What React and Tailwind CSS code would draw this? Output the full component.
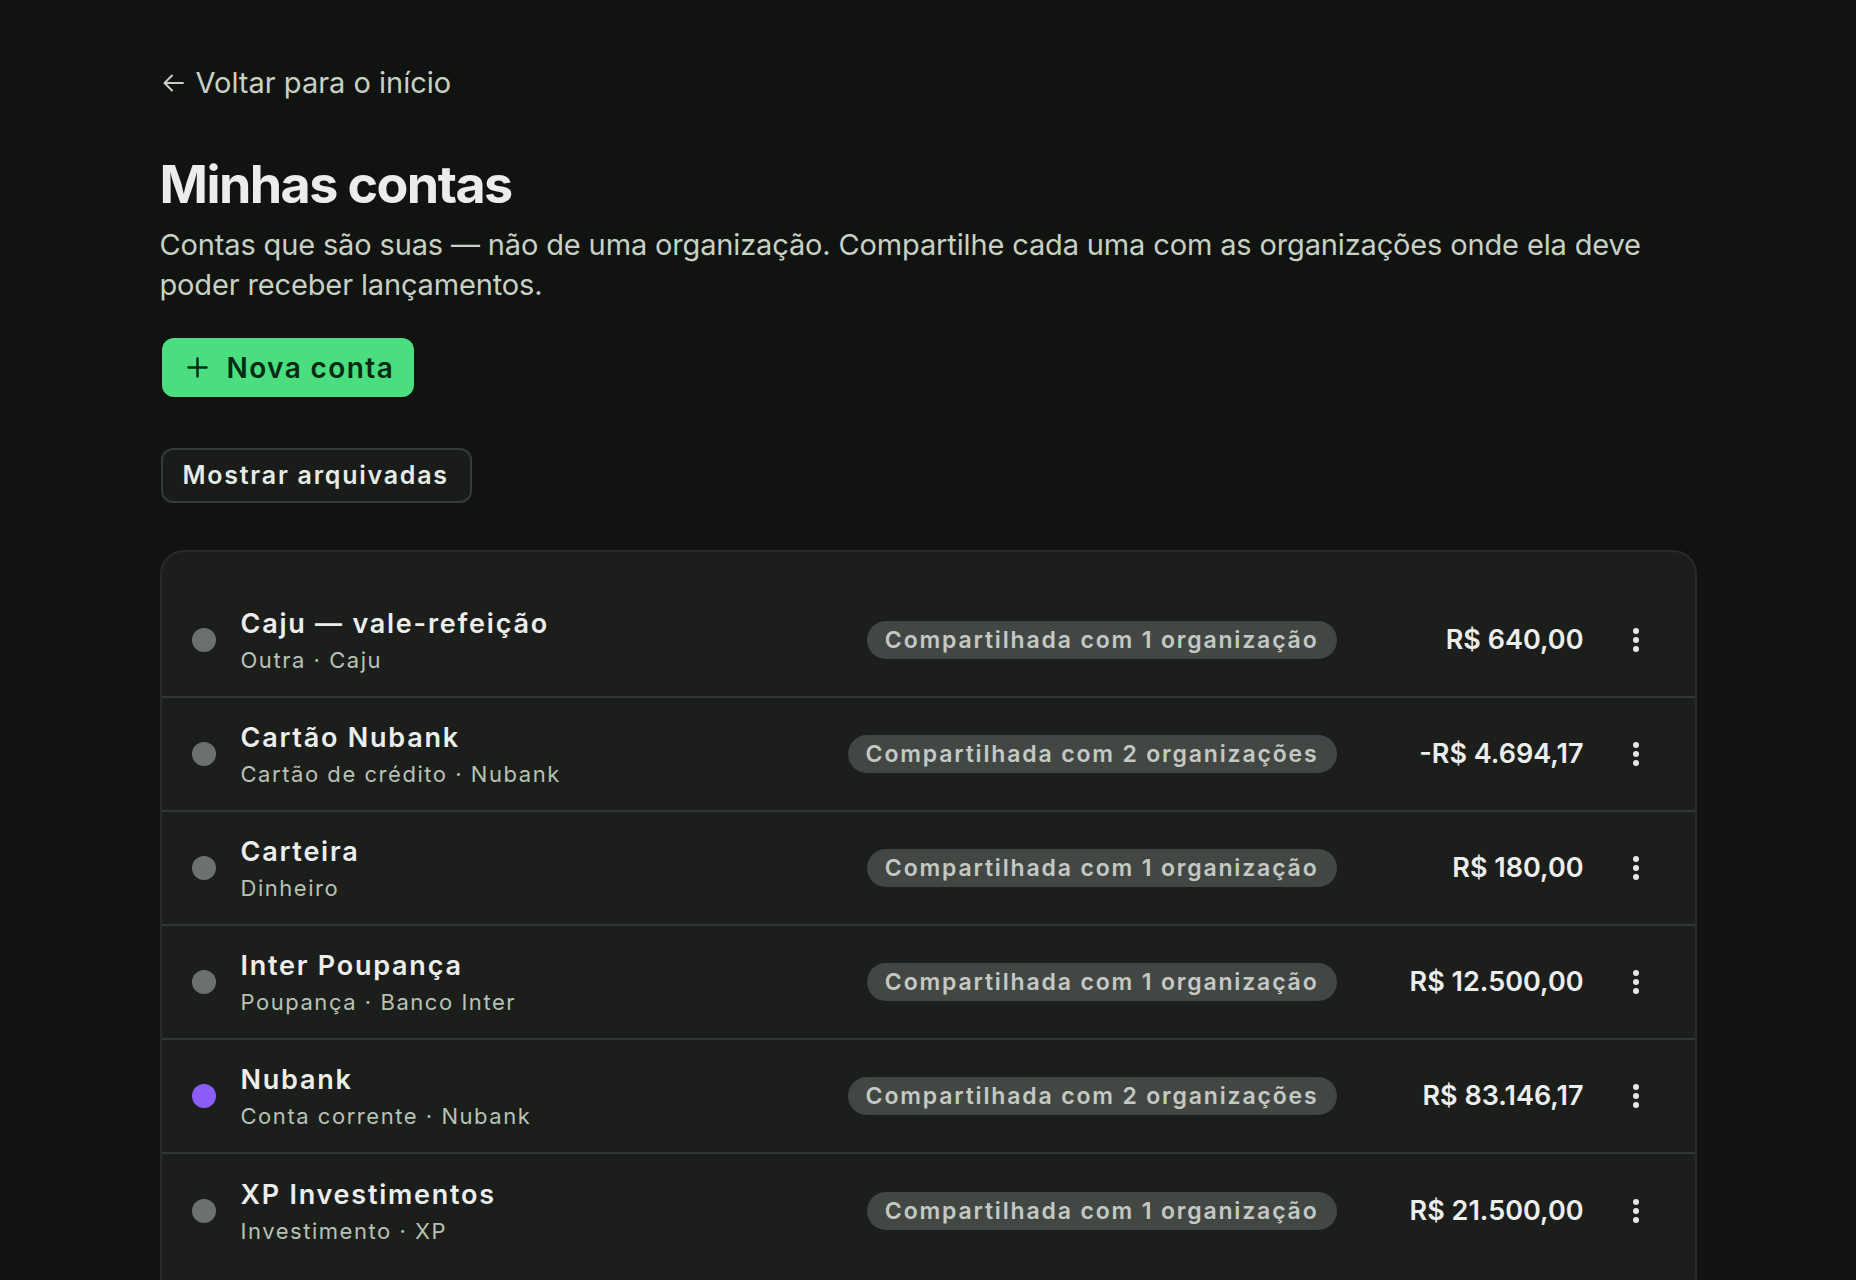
import React from "react";

const accounts = [
  { name: "Caju — vale-refeição", sub: "Outra · Caju", badge: "Compartilhada com 1 organização", amount: "R$ 640,00", dot: "bg-[#6b716c]" },
  { name: "Cartão Nubank", sub: "Cartão de crédito · Nubank", badge: "Compartilhada com 2 organizações", amount: "-R$ 4.694,17", dot: "bg-[#6b716c]" },
  { name: "Carteira", sub: "Dinheiro", badge: "Compartilhada com 1 organização", amount: "R$ 180,00", dot: "bg-[#6b716c]" },
  { name: "Inter Poupança", sub: "Poupança · Banco Inter", badge: "Compartilhada com 1 organização", amount: "R$ 12.500,00", dot: "bg-[#6b716c]" },
  { name: "Nubank", sub: "Conta corrente · Nubank", badge: "Compartilhada com 2 organizações", amount: "R$ 83.146,17", dot: "bg-[#8b5cf6]" },
  { name: "XP Investimentos", sub: "Investimento · XP", badge: "Compartilhada com 1 organização", amount: "R$ 21.500,00", dot: "bg-[#6b716c]" },
];

function Kebab() {
  return (
    <svg width="12" height="30" viewBox="0 0 12 30" fill="#e5e8e5">
      <circle cx="6" cy="6" r="3" />
      <circle cx="6" cy="15" r="3" />
      <circle cx="6" cy="24" r="3" />
    </svg>
  );
}

function Row({ a, last }) {
  return (
    <div className={"flex items-center h-[114px] pl-[30px] pr-[41px] " + (last ? "" : "border-b-2 border-[#2f3833]")}>
      <div className={"w-[24px] h-[24px] rounded-full shrink-0 " + a.dot} />
      <div className="ml-[25px] flex flex-col min-w-0 flex-1">
        <div className="text-[27px] leading-[40px] font-semibold text-[#eceeec] tracking-[0.065em] whitespace-nowrap">{a.name}</div>
        <div className="text-[22px] leading-[32px] text-[#b7c2b4] tracking-[0.07em] whitespace-nowrap">{a.sub}</div>
      </div>
      <div className="h-[38px] px-[18px] rounded-full bg-[#434744] flex items-center text-[23px] font-semibold text-[#c4c9c4] tracking-[0.08em] whitespace-nowrap">
        {a.badge}
      </div>
      <div className="w-[247px] text-right text-[27px] font-semibold text-[#eceeec] whitespace-nowrap">{a.amount}</div>
      <div className="ml-[34px] w-[36px] h-[36px] flex items-center justify-center">
        <Kebab />
      </div>
    </div>
  );
}

export default function App() {
  return (
    <div className="min-h-screen w-full bg-[#111311] font-['Inter',sans-serif] overflow-hidden h-[1280px]">
      <div className="w-[1537px] mx-auto pt-[62px]">
        <a className="flex items-center h-[42px] text-[29px] text-[#c7d1c4] ml-[3px]">
          <svg width="21" height="18" viewBox="0 0 21 18" fill="none" stroke="#c7d1c4" strokeWidth="2" strokeLinecap="round" strokeLinejoin="round">
            <path d="M20 9H1.5M9 1.5L1.5 9L9 16.5" />
          </svg>
          <span className="ml-[12px]">Voltar para o início</span>
        </a>
        <h1 className="mt-[51px] text-[52px] leading-[60px] font-bold text-[#ececec] tracking-[-0.03em]">Minhas contas</h1>
        <p className="mt-[10px] text-[29px] leading-[40px] text-[#c7d1c4] tracking-[-0.005em]">
          Contas que são suas — não de uma organização. Compartilhe cada uma com as organizações onde ela deve poder receber lançamentos.
        </p>
        <button className="mt-[33px] ml-[2px] h-[59px] w-[252px] rounded-[12px] bg-[#4ade80] flex items-center pl-[25px] text-[28px] font-semibold text-[#062a12] tracking-[0.05em]">
          <svg width="21" height="21" viewBox="0 0 21 21" fill="none" stroke="#062a12" strokeWidth="2.4" strokeLinecap="round">
            <path d="M10.5 1.5V19.5M1.5 10.5H19.5" />
          </svg>
          <span className="ml-[19px]">Nova conta</span>
        </button>
        <button className="mt-[51px] ml-[1px] h-[55px] w-[311px] rounded-[12px] bg-[#1a1c1a] border-2 border-[#373b38] flex items-center pl-[20px] text-[25px] font-semibold text-[#e6ebe5] tracking-[0.07em]">
          Mostrar arquivadas
        </button>
        <div className="mt-[47px] rounded-[24px] border-2 border-[#282b29] bg-[#1c1e1c] pt-[32px] pb-[30px]">
          {accounts.map((a, i) => (
            <Row key={i} a={a} last={i === accounts.length - 1} />
          ))}
        </div>
      </div>
    </div>
  );
}
